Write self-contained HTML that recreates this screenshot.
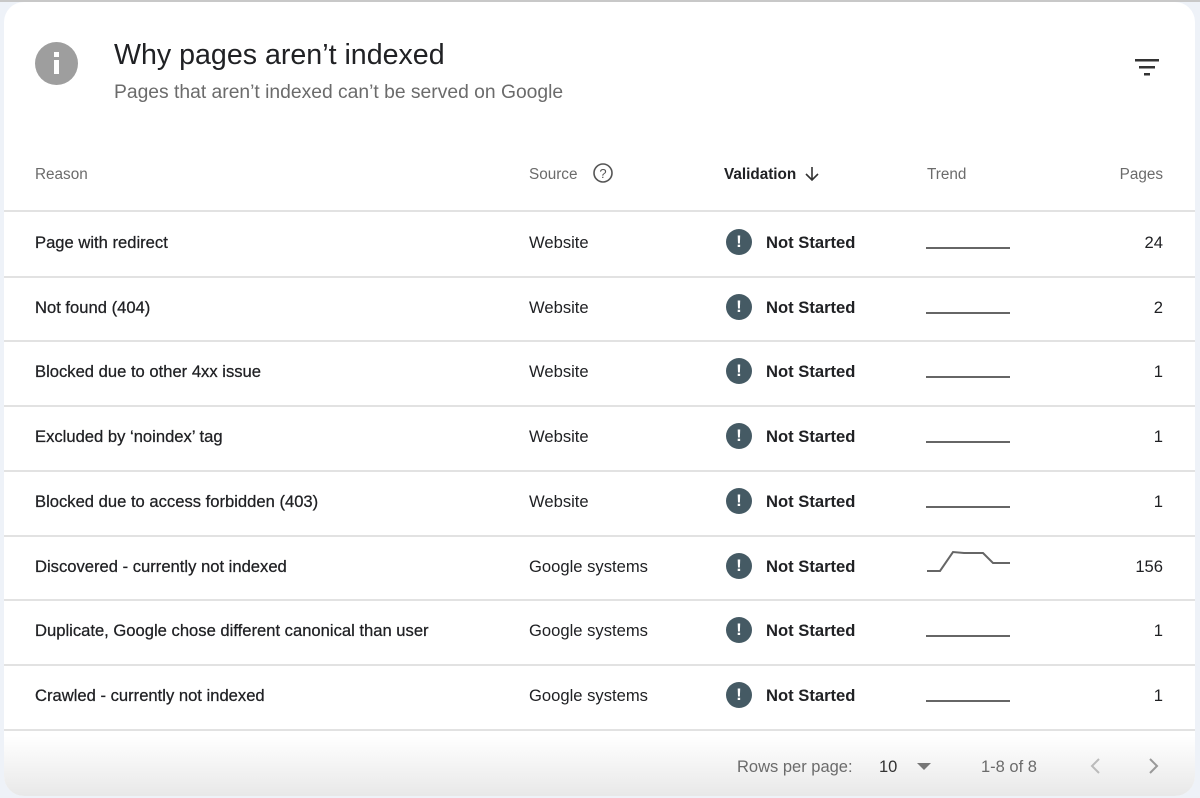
<!DOCTYPE html>
<html><head><meta charset="utf-8"><style>
*{box-sizing:border-box;margin:0;padding:0}
body{width:1200px;height:798px;background:#eef2f8;font-family:"Liberation Sans",sans-serif;position:relative;overflow:hidden}
.topline{position:absolute;left:0;top:0;width:1200px;height:2px;background:#c8c8c8}
.card{position:absolute;left:4px;top:2px;width:1191px;height:794px;background:#fff;border-radius:20px;overflow:hidden}
.fade{position:absolute;left:0;right:0;bottom:0;height:60px;background:linear-gradient(#fff,#e8e8e8)}
.abs{position:absolute}
.info{left:31px;top:40px;width:43px;height:43px;border-radius:50%;background:#9e9e9e}
h1{position:absolute;left:110px;top:37px;font-size:28.6px;font-weight:400;color:#202124}
.sub{left:110px;top:80px;font-size:19.3px;color:#6b6b6b}
.hd{top:164px;font-size:15.3px;color:#6b6b6b}
.line{position:absolute;left:0;width:1191px;height:2px;background:#e2e2e2}
.cell{position:absolute;font-size:16.6px;color:#202124;-webkit-text-stroke:0.25px #202124}
.ex{position:absolute;width:26px;height:26px;border-radius:50%;background:#455a64;color:#fff;font-weight:700;font-size:17px;text-align:center;line-height:26px}
.num{position:absolute;right:32px;font-size:16.6px;color:#202124;text-align:right}
</style></head><body>
<div class="topline"></div>
<div class="card">
<div class="fade"></div>
<div class="abs info"><div style="position:absolute;left:19px;top:10px;width:5px;height:5px;background:#fff"></div><div style="position:absolute;left:19px;top:18px;width:5px;height:14px;background:#fff"></div></div>
<h1>Why pages aren’t indexed</h1>
<div class="abs sub">Pages that aren’t indexed can’t be served on Google</div>
<svg class="abs" style="left:1130px;top:55px" width="26" height="22"><rect x="1" y="2" width="24" height="2.5" fill="#333"/><rect x="5" y="9" width="16" height="2.5" fill="#333"/><rect x="10" y="16" width="6" height="2.5" fill="#333"/></svg>
<div class="abs hd" style="left:31px">Reason</div>
<div class="abs hd" style="left:525px">Source</div>
<svg class="abs" style="left:588px;top:160px" width="22" height="22"><circle cx="11" cy="11" r="9" fill="none" stroke="#555" stroke-width="1.6"/><text x="11" y="16" font-size="13" text-anchor="middle" fill="#555" font-family="Liberation Sans">?</text></svg>
<div class="abs hd" style="left:720px;color:#202124;font-weight:700">Validation</div>
<svg class="abs" style="left:800px;top:163px" width="16" height="18"><path d="M8 2v13M2 9l6 6 6-6" fill="none" stroke="#333" stroke-width="1.6"/></svg>
<div class="abs hd" style="left:923px">Trend</div>
<div class="abs hd" style="right:32px">Pages</div>
<div class="line" style="top:208px"></div>
<div id="rows"></div>
<div class="abs" style="left:733px;top:756px;font-size:16.5px;color:#6b6b6b">Rows per page:</div>
<div class="abs" style="left:875px;top:756px;font-size:16.5px;color:#333">10</div>
<svg class="abs" style="left:912px;top:760px" width="16" height="10"><path d="M1 1h14l-7 7z" fill="#777"/></svg>
<div class="abs" style="left:977px;top:756px;font-size:16.5px;color:#6b6b6b">1-8 of 8</div>
<svg class="abs" style="left:1084px;top:754px" width="16" height="20"><path d="M11 3L4 10l7 7" fill="none" stroke="#bbb" stroke-width="2"/></svg>
<svg class="abs" style="left:1141px;top:754px" width="16" height="20"><path d="M5 3l7 7-7 7" fill="none" stroke="#999" stroke-width="2"/></svg>
</div>
<script>
var d=[["Page with redirect","Website","24"],["Not found (404)","Website","2"],["Blocked due to other 4xx issue","Website","1"],["Excluded by ‘noindex’ tag","Website","1"],["Blocked due to access forbidden (403)","Website","1"],["Discovered - currently not indexed","Google systems","156"],["Duplicate, Google chose different canonical than user","Google systems","1"],["Crawled - currently not indexed","Google systems","1"]];
var h="";
for(var i=0;i<8;i++){var t=210+i*64.7;var y=t+21;
h+='<div class="cell" style="left:31px;top:'+y+'px">'+d[i][0]+'</div>';
h+='<div class="cell" style="left:525px;top:'+y+'px;-webkit-text-stroke:0">'+d[i][1]+'</div>';
h+='<div class="ex" style="left:722px;top:'+(t+17)+'px">!</div>';
h+='<div class="cell" style="left:762px;top:'+y+'px;font-weight:700;-webkit-text-stroke:0">Not Started</div>';
if(i==5)h+='<svg class="abs" style="left:922px;top:'+(t+8)+'px" width="90" height="30"><path d="M1 27h13l13-19 11 1h19l10 10h17" fill="none" stroke="#666" stroke-width="2"/></svg>';
else h+='<div class="abs" style="left:922px;top:'+(t+35)+'px;width:84px;height:2px;background:#666"></div>';
h+='<div class="num" style="top:'+y+'px">'+d[i][2]+'</div>';
h+='<div class="line" style="top:'+(t+63.7)+'px"></div>';}
document.getElementById("rows").innerHTML=h;
</script>
</body></html>
